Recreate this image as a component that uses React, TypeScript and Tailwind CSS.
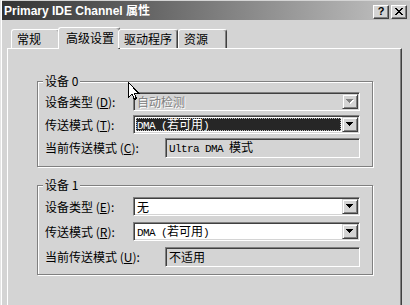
import React from "react";

function TitleBtn({ children }: { children: React.ReactNode }) {
  return (
    <div className="w-[16px] h-[14px] flex items-center justify-center bg-[#d4d4d4] border-t border-l border-t-white border-l-white border-b border-r border-b-[#404040] border-r-[#404040] shadow-[inset_-1px_-1px_0_#808080]">
      {children}
    </div>
  );
}

function DownArrow({ disabled }: { disabled?: boolean }) {
  return (
    <svg width="8" height="5" viewBox="0 0 8 5" shapeRendering="crispEdges" className="block">
      {disabled && <polygon points="1,1 8,1 4.5,5" fill="#ffffff" />}
      <polygon points="0,0 7,0 3.5,4" fill={disabled ? "#808080" : "#000000"} />
    </svg>
  );
}

function Combo({ children, disabled, focused }: { children: React.ReactNode; disabled?: boolean; focused?: boolean }) {
  return (
    <div
      className={`flex-1 h-[19px] flex p-px border border-t-[#808080] border-l-[#808080] border-b-white border-r-white shadow-[inset_1px_1px_0_#404040,inset_-1px_-1px_0_#d4d4d4] ${
        disabled ? "bg-[#d4d4d4]" : "bg-white"
      }`}
    >
      <div className="flex-1 flex items-center px-px min-w-0">
        {focused ? (
          <div className="w-full h-[13px] flex items-center pl-px bg-[#262626] text-white outline-1 outline-dotted outline-[#bbbbbb] -outline-offset-1">
            {children}
          </div>
        ) : (
          <div className={`pl-px leading-[14px] ${disabled ? "text-[#808080] [text-shadow:1px_1px_0_#fff]" : ""}`}>{children}</div>
        )}
      </div>
      <div className="w-[16px] h-full flex items-center justify-center bg-[#d4d4d4] border-t border-l border-t-[#d4d4d4] border-l-[#d4d4d4] border-b border-r border-b-[#404040] border-r-[#404040] shadow-[inset_1px_1px_0_#fff,inset_-1px_-1px_0_#808080]">
        <DownArrow disabled={disabled} />
      </div>
    </div>
  );
}

function ReadOnly({ children }: { children: React.ReactNode }) {
  return (
    <div className="flex-1 h-[20px] flex items-center pl-[2px] bg-[#d4d4d4] border border-t-[#808080] border-l-[#808080] border-b-white border-r-white shadow-[inset_1px_1px_0_#404040,inset_-1px_-1px_0_#d4d4d4]">
      <div className="pl-px leading-[14px]">{children}</div>
    </div>
  );
}

function Dma() {
  return (
    <span className="whitespace-pre">
      <span className="font-['Liberation_Mono',monospace] text-[11px] tracking-[-0.6px]">DMA (</span>
      <span>若可用</span>
      <span className="font-['Liberation_Mono',monospace] text-[11px]">)</span>
    </span>
  );
}

function Group({ title, children, className }: { title: string; children: React.ReactNode; className?: string }) {
  return (
    <div
      className={`relative w-[336px] border border-[#808080] shadow-[inset_1px_1px_0_#fff,1px_1px_0_#fff] pl-[7px] pr-[12px] flex flex-col ${className ?? ""}`}
    >
      <span className="absolute left-[5px] -top-[8px] px-[2px] bg-[#d4d4d4] leading-[14px] whitespace-pre">{title}</span>
      {children}
    </div>
  );
}

function Row({ label, key2, width, children }: { label: string; key2: string; width: string; children: React.ReactNode }) {
  return (
    <div className="flex items-center">
      <span className={`${width} shrink-0 leading-[14px] whitespace-pre`}>
        {label} (<u>{key2}</u>):
      </span>
      {children}
    </div>
  );
}

export default function App() {
  const tabs = [
    { label: "常规", w: "w-[49px]" },
    { label: "高级设置", w: "w-[62px]", selected: true },
    { label: "驱动程序", w: "w-[60px]" },
    { label: "资源", w: "w-[49px]" },
  ];

  return (
    <div className="relative w-[410px] h-[305px] overflow-hidden flex flex-col bg-[#d4d4d4] shadow-[inset_1px_0_0_#e4e4e4,inset_2px_0_0_#ffffff] font-['Noto_Sans_CJK_SC',sans-serif] text-[12px] text-black select-none">
      {/* title bar */}
      <div className="ml-[2px] mt-px h-[19px] shrink-0 flex items-center pl-[2px] pr-[3px] bg-linear-to-r from-[#343434] via-[#7a7a7a] to-[#c6c6c6]">
        <span className="font-['Liberation_Sans','Noto_Sans_CJK_SC',sans-serif] font-bold text-white text-[12px] leading-none">
          Primary IDE Channel 属性
        </span>
        <div className="ml-auto mt-[2px] flex gap-[2px]">
          <TitleBtn>
            <span className="font-['Liberation_Sans',sans-serif] font-bold text-[11px] leading-none">?</span>
          </TitleBtn>
          <TitleBtn>
            <svg width="8" height="7" viewBox="0 0 8 7" shapeRendering="crispEdges">
              <path d="M0 0h2v1H0zM6 0h2v1H6zM1 1h2v1H1zM5 1h2v1H5zM2 2h4v1H2zM3 3h2v1H3zM2 4h4v1H2zM1 5h2v1H1zM5 5h2v1H5zM0 6h2v1H0zM6 6h2v1H6z" fill="#000" />
            </svg>
          </TitleBtn>
        </div>
      </div>

      {/* tabs */}
      <div className="relative z-10 mt-[7px] h-[21px] shrink-0 flex items-end pl-[11px]">
        {tabs.map((t) =>
          t.selected ? (
            <div
              key={t.label}
              className={`${t.w} -mx-[2px] -mb-px h-[22px] flex items-center pl-[7px] pb-[2px] bg-[#d4d4d4] rounded-t-[3px] border-t border-l border-t-white border-l-white border-r border-r-[#404040] shadow-[inset_-1px_0_0_#808080]`}
            >
              {t.label}
            </div>
          ) : (
            <div
              key={t.label}
              className={`${t.w} h-[19px] flex items-center pl-[5px] bg-[#d4d4d4] rounded-t-[3px] border-t border-l border-t-white border-l-white border-r border-r-[#404040] shadow-[inset_-1px_0_0_#808080]`}
            >
              {t.label}
            </div>
          )
        )}
      </div>

      {/* page */}
      <div className="ml-[7px] w-[395px] flex-1 border-t border-l border-t-white border-l-white border-r border-r-[#404040] shadow-[inset_-1px_0_0_#808080] pt-[32px] pl-[29px] flex flex-col">
        <Group title="设备 0" className="pt-[10px] pb-[8px] gap-[4px]">
          <Row label="设备类型" key2="D" width="w-[88px]">
            <Combo disabled>自动检测</Combo>
          </Row>
          <Row label="传送模式" key2="T" width="w-[88px]">
            <Combo focused>
              <Dma />
            </Combo>
          </Row>
          <Row label="当前传送模式" key2="C" width="w-[120px]">
            <ReadOnly>
              <span className="font-['Liberation_Mono',monospace] text-[11px] tracking-[-0.6px] whitespace-pre">Ultra DMA </span>
              <span>模式</span>
            </ReadOnly>
          </Row>
        </Group>

        <Group title="设备 1" className="mt-[18px] pt-[11px] pb-[7px] gap-[6px]">
          <Row label="设备类型" key2="E" width="w-[88px]">
            <Combo>无</Combo>
          </Row>
          <Row label="传送模式" key2="R" width="w-[88px]">
            <Combo>
              <Dma />
            </Combo>
          </Row>
          <Row label="当前传送模式" key2="U" width="w-[120px]">
            <ReadOnly>不适用</ReadOnly>
          </Row>
        </Group>
      </div>

      {/* mouse pointer */}
      <svg className="absolute left-[128px] top-[82px]" width="12" height="19" viewBox="0 0 12 19" shapeRendering="crispEdges">
        <path d="M0.5 0.5 L0.5 15.5 L4 12 L6.5 17.5 L8.5 16.5 L6 11 L10.5 11 Z" fill="#fff" stroke="#000" strokeWidth="1" />
      </svg>
    </div>
  );
}
